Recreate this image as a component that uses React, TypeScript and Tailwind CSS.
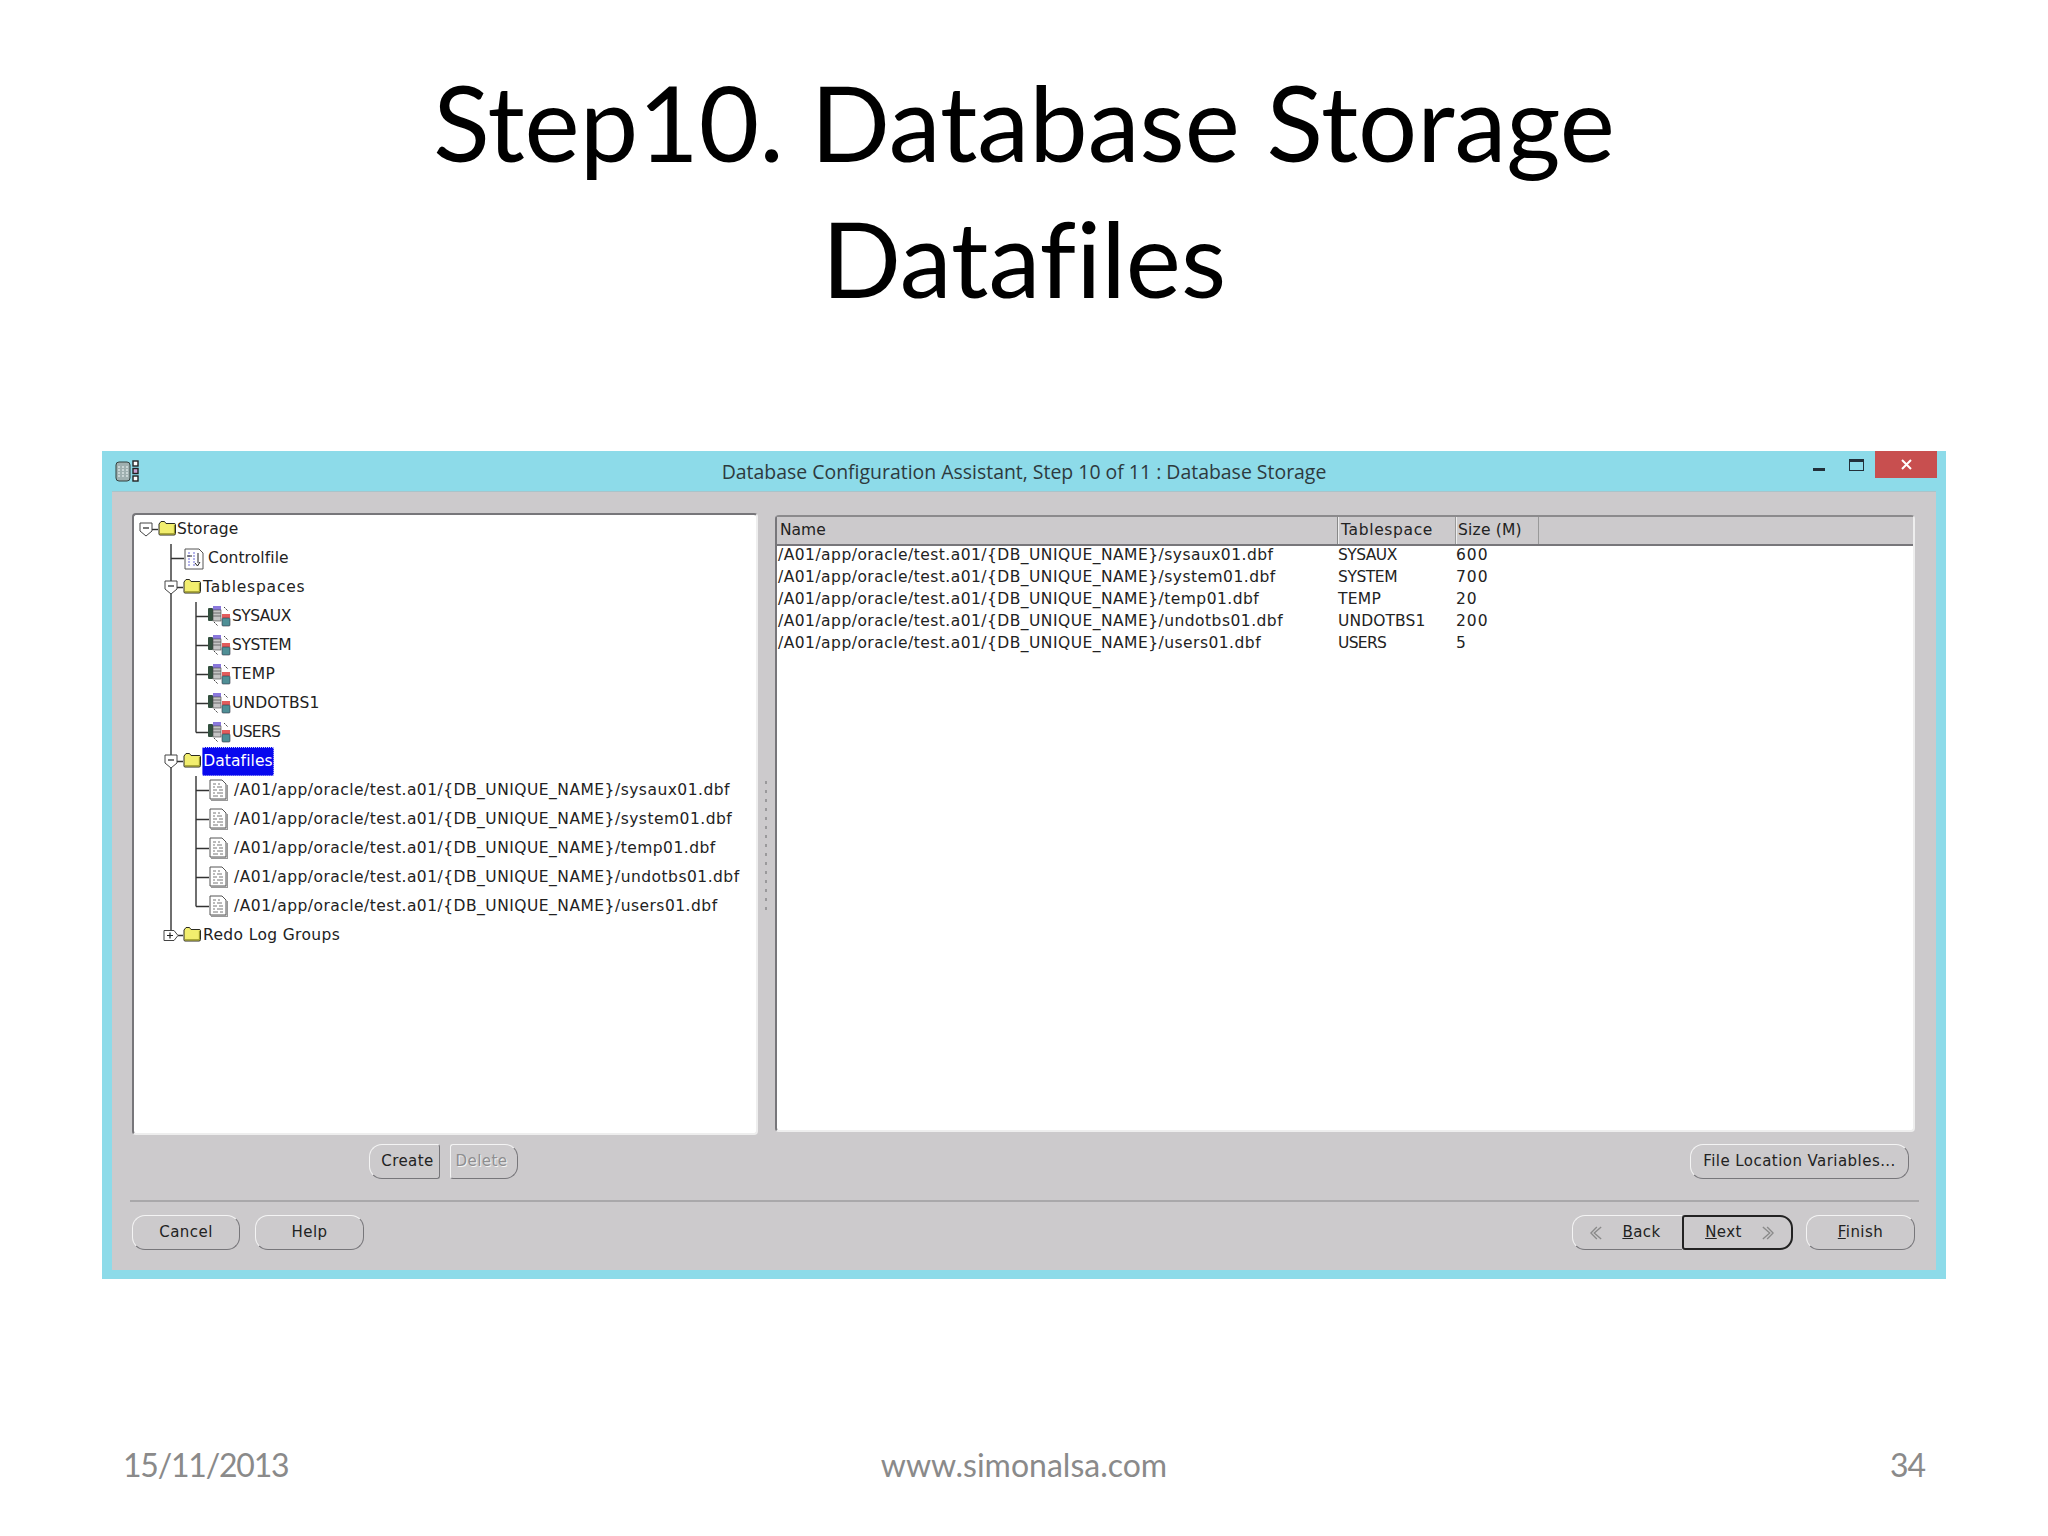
import React from 'react';

const DIALOG_FONT = "font-['DejaVu_Sans',sans-serif]";

const FILES = ['sysaux01', 'system01', 'temp01', 'undotbs01', 'users01'];
const SPACES = [
  { name: 'SYSAUX', size: '600', track: 'tracking-[-0.55px]' },
  { name: 'SYSTEM', size: '700', track: 'tracking-[-0.45px]' },
  { name: 'TEMP', size: '20', track: 'tracking-[0.3px]' },
  { name: 'UNDOTBS1', size: '200', track: 'tracking-[0.1px]' },
  { name: 'USERS', size: '5', track: 'tracking-[-0.7px]' },
];
const filePath = (f: string) => `/A01/app/oracle/test.a01/{DB_UNIQUE_NAME}/${f}.dbf`;

function Folder() {
  return (
    <svg width="18" height="15" viewBox="0 0 18 15" className="shrink-0 -mt-[3px]">
      <path d="M1 3 L1 13 Q1 14 2 14 L16 14 Q17.5 14 17.5 12.5 L17.5 3.5 Q17.5 2.5 16 2.5 L8 2.5 L6.5 .5 L3 .5 Z" fill="#f2ee6e" stroke="#2b2b20" strokeWidth="1" />
      <path d="M2 12.8 H16.4 V4" stroke="#8f8c20" strokeWidth="1" fill="none" />
    </svg>
  );
}

function Expander({ x, open }: { x: number; open: boolean }) {
  if (!open) {
    return (
      <g>
        <path d={`M${x - 7} 9.5 H${x + 3} L${x + 7} 14.5 L${x + 3} 19.5 H${x - 7} Z`} fill="#fff" stroke="#444" strokeWidth="1" />
        <path d={`M${x - 4} 14.5 H${x + 2} M${x - 1} 11.5 V17.5`} stroke="#222" strokeWidth="1.2" />
      </g>
    );
  }
  return (
    <g>
      <path d={`M${x - 6} 8 H${x + 6} V16 L${x} 21 L${x - 6} 16 Z`} fill="#fff" stroke="#444" strokeWidth="1" />
      <path d={`M${x - 3} 13 H${x + 3}`} stroke="#222" strokeWidth="1.2" />
    </g>
  );
}

// connector column to the left of each tree row
function Guide({ w, d, exp }: { w: number; d: string; exp?: { x: number; open: boolean } }) {
  return (
    <svg width={w} height="29" className="shrink-0">
      <path d={d} stroke="#333" strokeWidth="1.4" fill="none" />
      {exp && <Expander x={exp.x} open={exp.open} />}
    </svg>
  );
}

function ControlIcon() {
  return (
    <svg width="20" height="22" viewBox="0 0 20 22" className="shrink-0">
      <path d="M1 1 H15 L19 5 V21 H1 Z" fill="#fff" stroke="#555" />
      <path d="M5 4 V18 M10 4 V18" stroke="#6a6ad8" strokeWidth="1" strokeDasharray="2 1" />
      <path d="M3 8 H8 M11 15 L13.5 18 L16 14 M14 5 V15" stroke="#222" strokeWidth="1" fill="none" />
    </svg>
  );
}

function SpaceIcon() {
  return (
    <svg width="23" height="22" viewBox="0 0 23 22" className="shrink-0 -mt-[2px]">
      <rect x="0" y="3" width="5" height="13" rx="1" fill="#33503f" />
      <rect x="5" y="1" width="8" height="4" fill="#8a78dc" />
      <rect x="5" y="5" width="8" height="11" fill="#c4c4c4" stroke="#444" strokeWidth=".6" />
      <path d="M5 8 H13 M5 11 H13" stroke="#555" strokeWidth=".8" />
      <path d="M16 2 L20 6 M6 17 L10 21" stroke="#444" strokeWidth="1" strokeDasharray="2 1" />
      <rect x="14" y="9" width="8" height="4" fill="#e25c5c" />
      <rect x="14" y="13" width="8" height="8" rx="1" fill="#4f8f96" stroke="#334" strokeWidth=".6" />
    </svg>
  );
}

function FileIcon() {
  return (
    <svg width="19" height="22" viewBox="0 0 19 22" className="shrink-0 -mt-[2px]">
      <path d="M2 21.5 H18.5 V6" stroke="#999" strokeWidth="1.4" fill="none" />
      <path d="M1 1 H13 L17 5 V20 H1 Z" fill="#fff" stroke="#555" />
      <path d="M4 5 H7 M9 5 H11 M4 8 H6 M8 8 H13 M4 11 H8 M10 11 H14 M4 14 H6 M8 14 H14 M4 17 H9 M11 17 H14" stroke="#777" strokeWidth="1" />
    </svg>
  );
}

function WindowIcon() {
  return (
    <svg width="24" height="22" viewBox="0 0 24 22" className="shrink-0">
      <rect x="1" y="2" width="14" height="19" rx="3" fill="#9fb0b0" stroke="#33413f" />
      <path d="M4 6 V18 M8 6 V18 M12 6 V18" stroke="#e6eeee" strokeWidth="1.2" strokeDasharray="2 1" />
      <rect x="18" y="1" width="5" height="5" fill="#fff" stroke="#222" strokeWidth="1.4" />
      <rect x="18" y="8.5" width="5" height="5" fill="#c8a0d0" stroke="#222" strokeWidth="1.4" />
      <rect x="18" y="16" width="5" height="5" fill="#fff" stroke="#222" strokeWidth="1.4" />
    </svg>
  );
}

function TreeRow({ guide, icon, label, textClass }: { guide: React.ReactNode; icon: React.ReactNode; label: string; textClass: string }) {
  return (
    <div className="flex items-center h-[29px]">
      {guide}
      {icon}
      <span className={`text-[15.5px] text-[#222] whitespace-nowrap ${textClass}`}>{label}</span>
    </div>
  );
}

function Tree() {
  const top = 'M37 0 V29';
  return (
    <div className="flex flex-col">
      <TreeRow guide={<Guide w={24} d="M18 14.5 H24" exp={{ x: 12, open: true }} />} icon={<Folder />} label="Storage" textClass="ml-[1px] tracking-[0.1px]" />
      <TreeRow guide={<Guide w={50} d={`${top} M37 14.5 H50`} />} icon={<ControlIcon />} label="Controlfile" textClass="ml-1 tracking-[0.1px]" />
      <TreeRow guide={<Guide w={49} d={`${top} M43 14.5 H49`} exp={{ x: 37, open: true }} />} icon={<Folder />} label="Tablespaces" textClass="ml-[2px] tracking-[0.8px]" />
      {SPACES.map((s, i) => (
        <TreeRow
          key={s.name}
          guide={<Guide w={74} d={`${top} M62 0 V${i === 4 ? 14.5 : 29} M62 14.5 H74`} />}
          icon={<SpaceIcon />}
          label={s.name}
          textClass={`ml-[1px] ${s.track}`}
        />
      ))}
      <div className="flex items-center h-[29px]">
        <Guide w={49} d={`${top} M43 14.5 H49`} exp={{ x: 37, open: true }} />
        <Folder />
        <span className="text-[15.5px] tracking-[0.1px] whitespace-nowrap ml-[1px] bg-[#0808ee] text-white h-[29px] w-[72px] flex items-center justify-center border border-dotted border-[#c8c8ff] rounded-[2px]">Datafiles</span>
      </div>
      {FILES.map((f, i) => (
        <TreeRow
          key={f}
          guide={<Guide w={75} d={`${top} M62 0 V${i === 4 ? 14.5 : 29} M62 14.5 H75`} />}
          icon={<FileIcon />}
          label={filePath(f)}
          textClass="ml-[6px] tracking-[0.48px]"
        />
      ))}
      <TreeRow guide={<Guide w={49} d="M37 0 V9 M44 14.5 H49" exp={{ x: 37, open: false }} />} icon={<Folder />} label="Redo Log Groups" textClass="ml-[2px] tracking-[0.36px]" />
    </div>
  );
}

function Btn({ children, className = '', muted }: { children: React.ReactNode; className?: string; muted?: boolean }) {
  return (
    <div className={`h-[35px] flex items-center justify-center text-[15px] tracking-[0.45px] ${muted ? 'text-[#8e8e90] [text-shadow:1px_1px_0_#f4f4f4]' : 'text-[#222]'} border border-t-[#f4f4f4] border-l-[#f4f4f4] border-b-[#77767a] border-r-[#77767a] ${className}`}>
      {children}
    </div>
  );
}

function Chevrons({ left, color = '#8a8a8a' }: { left?: boolean; color?: string }) {
  return (
    <svg width="12" height="16" viewBox="0 0 14 16" className="shrink-0">
      <path d={left ? 'M13 1 L5 8 L13 15 M8 1 L1 8 L8 15' : 'M1 1 L9 8 L1 15 M6 1 L13 8 L6 15'} fill="none" stroke={color} strokeWidth="1.6" />
    </svg>
  );
}

export default function App() {
  return (
    <div className="w-[2048px] h-[1536px] bg-white flex flex-col font-['Lato',sans-serif] [font-variant-ligatures:none]">
      <h1 className="pt-[54px] text-center text-[104.4px] leading-[136px] text-black font-normal">
        Step10. Database Storage
        <br />
        Datafiles
      </h1>

      {/* dialog */}
      <div className={`mt-[125px] ml-[102px] w-[1844px] h-[828px] bg-[#8ddbe9] flex flex-col ${DIALOG_FONT}`}>
        <div className="h-[40px] flex items-center relative shrink-0">
          <div className="ml-[13px]"><WindowIcon /></div>
          <div className="flex-1 text-center text-[19.45px] text-[#2d3a3e] font-['Open_Sans',sans-serif] pl-[96px] pt-[2px]">
            Database Configuration Assistant, Step 10 of 11 : Database Storage
          </div>
          <div className="flex items-start self-start mr-[9px] h-[27px]">
            <div className="w-[12px] h-[3px] bg-[#22303a] mt-[17px] mr-[24px]" />
            <div className="w-[15px] h-[12px] border border-[#22303a] border-t-[3px] mt-[8px] mr-[11px]" />
            <div className="w-[62px] h-[27px] bg-[#c84f4f] flex items-center justify-center">
              <svg width="11" height="11" viewBox="0 0 11 11"><path d="M1 1 L10 10 M10 1 L1 10" stroke="#fff" strokeWidth="2" /></svg>
            </div>
          </div>
        </div>

        <div className="mx-[10px] h-[779px] bg-[#cccacc] flex flex-col pl-[20px] pr-[19px] pt-[21px] border-t border-[#a9c4ca]">
          <div className="flex h-[622px] shrink-0">
            <div className="w-[626px] h-full bg-white border-2 border-t-[#77767a] border-l-[#77767a] border-b-[#eeeeee] border-r-[#eeeeee] rounded-[4px]">
              <Tree />
            </div>
            {/* splitter */}
            <div className="w-[17px] flex flex-col items-center pt-[268px] pr-[2px] gap-[6px]">
              {Array.from({ length: 15 }).map((_, i) => (
                <div key={i} className="w-[2px] h-[3px] bg-[#9a999b]" />
              ))}
            </div>
            <div className="w-[1140px] h-[617px] mt-[2px] bg-white border-2 border-t-[#8b8a8c] border-l-[#77767a] border-b-[#eeeeee] border-r-[#eeeeee] rounded-[4px] flex flex-col">
              <div className="flex h-[29px] bg-[#cccacc] border-b-2 border-[#77767a] text-[15.5px] text-[#222] shrink-0">
                <div className="w-[561px] pl-[3px] flex items-center border-r border-[#888]">Name</div>
                <div className="w-[118px] pl-[2px] flex items-center border-l border-r border-l-[#eeeeee] border-r-[#999] tracking-[0.65px]">Tablespace</div>
                <div className="w-[83px] pl-[1px] flex items-center border-l border-r border-l-[#eeeeee] border-r-[#999] tracking-[0.2px]">Size (M)</div>
              </div>
              <div className="flex flex-col text-[15.5px] text-[#222] -mt-[1px]">
                {FILES.map((f, i) => (
                  <div key={f} className="flex h-[22px] items-center whitespace-nowrap">
                    <div className="w-[560px] pl-[1px] tracking-[0.47px]">{filePath(f)}</div>
                    <div className={`w-[118px] pl-[1px] ${SPACES[i].track}`}>{SPACES[i].name}</div>
                    <div className="pl-[1px] tracking-[1px]">{SPACES[i].size}</div>
                  </div>
                ))}
              </div>
            </div>
          </div>

          <div className="flex mt-[9px] h-[35px] shrink-0">
            <Btn className="ml-[237px] w-[71px] rounded-l-[13px] rounded-r-[3px] pl-[6px]">Create</Btn>
            <Btn className="ml-[10px] w-[68px] rounded-r-[13px] rounded-l-[3px] pr-[5px]" muted>Delete</Btn>
            <Btn className="ml-auto mr-[8px] w-[219px] rounded-[13px]">File Location Variables...</Btn>
          </div>

          <div className="mt-[21px] h-[2px] bg-[#a9a8aa] ml-[-2px] mr-[-2px] shrink-0" />

          <div className="flex mt-[13px] shrink-0">
            <Btn className="w-[108px] rounded-[13px]">Cancel</Btn>
            <Btn className="ml-[15px] w-[109px] rounded-[13px]">Help</Btn>
            <div className="ml-auto flex">
              <Btn className="w-[110px] rounded-l-[13px] border-r-0 gap-[20px] pr-[4px]">
                <Chevrons left />
                <span><span className="underline">B</span>ack</span>
              </Btn>
              <div className="w-[111px] h-[35px] flex items-center justify-center gap-[20px] text-[15px] tracking-[0.45px] text-[#222] border-2 border-[#222] rounded-r-[13px] rounded-l-[3px] pl-[4px]">
                <span><span className="underline">N</span>ext</span>
                <Chevrons />
              </div>
              <Btn className="ml-[13px] mr-[2px] w-[109px] rounded-[13px]">
                <span><span className="underline">F</span>inish</span>
              </Btn>
            </div>
          </div>
        </div>
      </div>

      <div className="mt-[166px] px-[123px] grid grid-cols-3 text-[32px] leading-[40px] text-[#8a8a8a]">
        <div className="tracking-[-1.2px]">15/11/2013</div>
        <div className="text-center">www.simonalsa.com</div>
        <div className="text-right tracking-[-1px]">34</div>
      </div>
    </div>
  );
}
